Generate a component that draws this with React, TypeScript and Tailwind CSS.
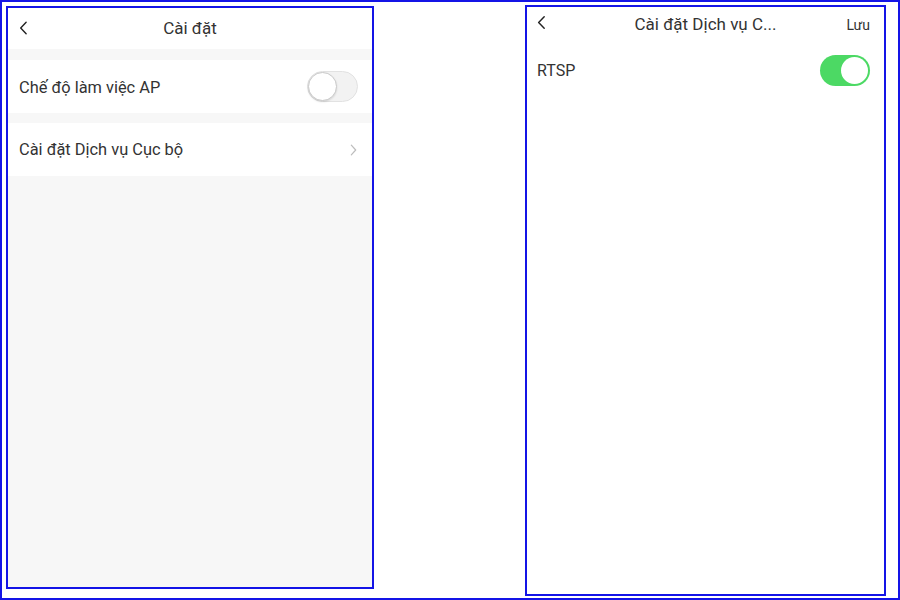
import React from "react";

function Chevron({ className }: { className?: string }) {
  return (
    <svg viewBox="0 0 10 16" className={className} fill="none" stroke="currentColor" strokeWidth="1.6" strokeLinecap="round" strokeLinejoin="round">
      <path d="M8 1.5 1.8 8 8 14.5" />
    </svg>
  );
}

function ChevronRight({ className }: { className?: string }) {
  return (
    <svg viewBox="0 0 8 14" className={className} fill="none" stroke="currentColor" strokeWidth="1.4" strokeLinecap="round" strokeLinejoin="round">
      <path d="M1.5 1.5 6.5 7 1.5 12.5" />
    </svg>
  );
}

function SwitchOff() {
  return (
    <div className="w-[51px] h-[31px] rounded-full bg-[#f2f2f2] border border-[#e2e2e2] flex items-center">
      <div className="w-[29px] h-[29px] rounded-full bg-white border border-[#c9c9c9] shadow-[0_1px_2px_rgba(0,0,0,0.12)]" />
    </div>
  );
}

function SwitchOn() {
  return (
    <div className="w-[50px] h-[31px] rounded-full bg-[#4cd964] flex items-center justify-end pr-[2px]">
      <div className="w-[27px] h-[27px] rounded-full bg-white" />
    </div>
  );
}

function SettingsPage() {
  return (
    <div className="w-[368px] h-[583px] mt-[1px] border-2 border-[#1414e6] bg-[#f7f7f7] flex flex-col">
      <div className="h-[41px] bg-white relative flex items-center justify-center shrink-0">
        <Chevron className="absolute left-[11px] top-[13px] w-[9px] h-[14px] text-[#222]" />
        <span className="text-[17px] text-[#333]">Cài đặt</span>
      </div>
      <div className="h-[11px] shrink-0" />
      <div className="h-[53px] bg-white flex items-center justify-between pl-[11px] pr-[14px] shrink-0">
        <span className="text-[16.4px] text-[#333] pt-[3px]">Chế độ làm việc AP</span>
        <SwitchOff />
      </div>
      <div className="h-[10px] shrink-0" />
      <div className="h-[53px] bg-white flex items-center justify-between pl-[11px] pr-[14px] shrink-0">
        <span className="text-[16.4px] text-[#333] pt-[2px]">Cài đặt Dịch vụ Cục bộ</span>
        <ChevronRight className="w-[7px] h-[14px] text-[#bdbdbd] mr-[1px]" />
      </div>
    </div>
  );
}

function LocalServicePage() {
  return (
    <div className="w-[361px] h-[591px] ml-[151px] border-2 border-[#1414e6] bg-white flex flex-col">
      <div className="h-[34px] relative flex items-center justify-center shrink-0">
        <Chevron className="absolute left-[10px] top-[8px] w-[9px] h-[15px] text-[#222]" />
        <span className="text-[17px] text-[#333] pt-[1px]">Cài đặt Dịch vụ C...</span>
        <span className="absolute right-[14px] top-[8px] text-[14px] text-[#333]">Lưu</span>
      </div>
      <div className="h-[59px] flex items-center justify-between pl-[10px] pr-[14px] shrink-0">
        <span className="text-[16px] text-[#333] pt-[1px]">RTSP</span>
        <SwitchOn />
      </div>
    </div>
  );
}

export default function App() {
  return (
    <div
      className="w-[900px] h-[600px] border-2 border-[#1414e6] bg-white flex items-start pl-[4px] pt-[3px]"
      style={{ fontFamily: "Roboto, 'Noto Sans', sans-serif" }}
    >
      <SettingsPage />
      <LocalServicePage />
    </div>
  );
}
